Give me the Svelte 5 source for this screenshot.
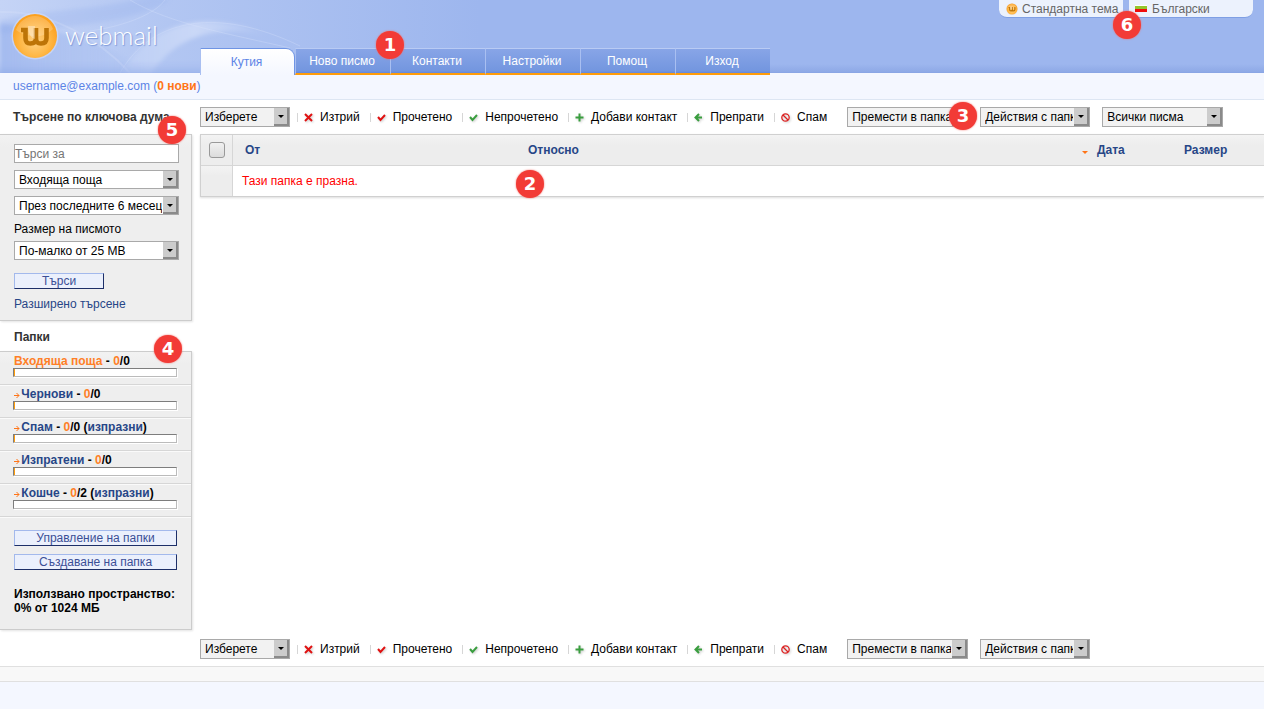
<script>
  const tabs = ['Кутия', 'Ново писмо', 'Контакти', 'Настройки', 'Помощ', 'Изход'];

  const actions = [
    {icon: 'delete', label: 'Изтрий'},
    {icon: 'read', label: 'Прочетено'},
    {icon: 'unread', label: 'Непрочетено'},
    {icon: 'add', label: 'Добави контакт'},
    {icon: 'forward', label: 'Препрати'},
    {icon: 'spam', label: 'Спам'},
  ];

  const folders = [
    {name: 'Входяща поща', unread: 0, total: 0, used: 0.6, active: true},
    {name: 'Чернови', unread: 0, total: 0, used: 0.6},
    {name: 'Спам', unread: 0, total: 0, used: 0.6, clear: true},
    {name: 'Изпратени', unread: 0, total: 0, used: 0.6},
    {name: 'Кошче', unread: 0, total: 2, used: 0, clear: true},
  ];

  let activeTab = $state(0);
  let keyword = $state('');
</script>

{#snippet dropdown(label, cls, id)}
  <span class="dropdown {cls}">
    <select {id} aria-label={id ? undefined : label}><option>{label}</option></select>
  </span>
{/snippet}

{#snippet logo(size)}
  <svg class="mark" width={size} height={size} viewBox="0 0 48 48" aria-hidden="true">
    <defs>
      <radialGradient id="ball{size}" cx="0.5" cy="0.62" r="0.55">
        <stop offset="0" stop-color="#ffd183" />
        <stop offset="0.6" stop-color="#ffb847" />
        <stop offset="1" stop-color="#fca120" />
      </radialGradient>
    </defs>
    <circle cx="24" cy="24" r="23.500" fill="#d5e0fb" opacity="0.6" />
    <circle cx="24" cy="24" r="22" fill="url(#ball{size})" />
    <path d="M24 4a20 20 0 0 1 18 13c-7 6-12 8-20 7C12 23 8 20 5 18A20 20 0 0 1 24 4z" fill="#fff" opacity="0.2" />
    <path d="M10 18h4.500v8c0 4 1.500 5.500 5 5.500s5.500-1.500 5.500-5.500V16M25 26c0 4 1.500 5.500 5 5.500s5.500-1.500 5.500-5.500V16" fill="none" stroke="#bd7407" stroke-width="4.600" />
    <path d="M17 14h7v13c-4-1-7-5-7-13z" fill="#fff" opacity="0.35" />
  </svg>
{/snippet}

{#snippet icon(name)}
  <svg class="icon" width="9" height="9" viewBox="0 0 9 9" fill="none" stroke-width="2" aria-hidden="true">
    {#if name === 'delete'}
      <path d="M1 1l7 7M8 1l-7 7" stroke="#e01212" />
    {:else if name === 'read'}
      <path d="M1 4l2.500 3L8 2" stroke="#e01212" />
    {:else if name === 'unread'}
      <path d="M1 4l2.500 3L8 2" stroke="#3a9e3f" />
    {:else if name === 'add'}
      <path d="M4.500 0.500v8M0.500 4.500h8" stroke="#3a9e3f" />
    {:else if name === 'forward'}
      <path d="M5 1L1.500 4.500 5 8M2 4.500h6" stroke="#3a9e3f" />
    {:else}
      <circle cx="4.500" cy="4.500" r="3.700" stroke="#dd2222" stroke-width="1.300" />
      <path d="M2 2l5 5" stroke="#dd2222" stroke-width="1.300" />
    {/if}
  </svg>
{/snippet}

{#snippet toolbar()}
  {@render dropdown('Изберете', 'w90')}
  <div class="actions">
    {#each actions as action}
      <button class="action">{@render icon(action.icon)}{action.label}</button>
    {/each}
  </div>
{/snippet}

<header>
  <svg class="swirl" width="480" height="73" viewBox="0 0 480 73" aria-hidden="true">
    <defs>
      <linearGradient id="sky">
        <stop offset="0" stop-color="#c5d4f6" />
        <stop offset="0.35" stop-color="#b2c6f2" />
        <stop offset="1" stop-color="#9db6ee" />
      </linearGradient>
      <linearGradient id="wave">
        <stop offset="0" stop-color="#8eaaea" />
        <stop offset="1" stop-color="#9db6ee" stop-opacity="0" />
      </linearGradient>
      <linearGradient id="arc">
        <stop offset="0" stop-color="#dbe5fb" stop-opacity="0.2" />
        <stop offset="0.5" stop-color="#dbe5fb" stop-opacity="0.6" />
        <stop offset="1" stop-color="#dbe5fb" stop-opacity="0" />
      </linearGradient>
      <filter id="soft"><feGaussianBlur stdDeviation="2" /></filter>
    </defs>
    <path d="M0 0h480v73H0z" fill="url(#sky)" />
    <path d="M0 24C60 26 120 48 160 80H0z" fill="url(#wave)" opacity="0.6" filter="url(#soft)" />
    <path d="M0 20C50 8 90 12 150 -4L170 0C130 24 70 26 0 34z" fill="#8eaaea" opacity="0.25" filter="url(#soft)" />
    <path d="M120 76C150 20 210 8 270 36 220 24 175 34 150 76z" fill="url(#arc)" filter="url(#soft)" />
    <path d="M120 73C150 20 215 5 300 46M130 0c40 24 100 34 160 48M165 0c-10 14-40 26-75 31" fill="none" stroke="#dbe5fb" opacity="0.3" />
    <path d="M0 12C50 10 100 40 130 73" fill="none" stroke="#dbe5fb" stroke-width="2" opacity="0.25" />
  </svg>
  <a class="logo" href="#home">{@render logo(48)}<span>webmail</span></a>
  <nav>
    {#each tabs as tab, i}
      <a href="#tab{i}" class:active={i === activeTab} onclick={() => (activeTab = i)}>{tab}</a>
    {/each}
    <b class="badge one">1</b>
  </nav>
  <div class="prefs">
    <button class="theme">{@render logo(12)}Стандартна тема</button>
    <button class="lang"><i class="flag"></i>Български</button>
    <b class="badge six">6</b>
  </div>
</header>

<div class="user"><a href="#account">username@example.com</a> (<a class="new" href="#new">0 нови</a>)</div>

<div class="layout">
  <aside>
    <h2 class="first"><label for="keyword">Търсене по ключова дума</label><b class="badge five">5</b></h2>
    <form class="panel search" onsubmit={(e) => e.preventDefault()}>
      <input id="keyword" type="text" placeholder="Търси за" bind:value={keyword} />
      {@render dropdown('Входяща поща', 'plain')}
      {@render dropdown('През последните 6 месеца', 'plain')}
      <label for="size">Размер на писмото</label>
      {@render dropdown('По-малко от 25 MB', 'plain', 'size')}
      <button class="btn short">Търси</button>
      <a href="#advanced">Разширено търсене</a>
    </form>

    <h2>Папки<b class="badge four">4</b></h2>
    <div class="panel">
      <ul>
        {#each folders as folder}
          <li>
            <div class="name">
              {#if !folder.active}
                <svg width="6" height="7" viewBox="0 0 6 7" aria-hidden="true"><path d="M0 3.500h5M2.500 1L5 3.500 2.500 6" fill="none" stroke="#ff7417" /></svg>
              {/if}
              <a href="#folder" class:active={folder.active}>{folder.name}</a> - <span>{folder.unread}</span>/{folder.total}
              {#if folder.clear}(<a href="#clear">изпразни</a>){/if}
            </div>
            <div class="bar"><div style="width: {folder.used}%"></div></div>
          </li>
        {/each}
      </ul>
      <div class="manage">
        <button class="btn">Управление на папки</button>
        <button class="btn">Създаване на папка</button>
        <p>Използвано пространство:<br />0% от 1024 МБ</p>
      </div>
    </div>
  </aside>

  <main>
    <div class="toolbar">
      {@render toolbar()}
      {@render dropdown('Премести в папка', 'w121')}
      {@render dropdown('Действия с папката', 'w110')}
      {@render dropdown('Всички писма', 'w121')}
      <b class="badge three">3</b>
    </div>
    <div class="messages">
      <table>
        <thead>
          <tr>
            <th class="check"><input type="checkbox" aria-label="Маркирай всички" /></th>
            <th class="from"><a href="#from">От</a></th>
            <th><a href="#subject">Относно</a></th>
            <th class="date"><i class="sort"></i><a href="#date">Дата</a></th>
            <th class="size"><a href="#size">Размер</a></th>
          </tr>
        </thead>
        <tbody>
          <tr>
            <td class="check"></td>
            <td class="empty" colspan="4">Тази папка е празна.</td>
          </tr>
        </tbody>
      </table>
      <b class="badge two">2</b>
    </div>
    <div class="toolbar bottom">
      {@render toolbar()}
      {@render dropdown('Премести в папка', 'w121')}
      {@render dropdown('Действия с папката', 'w110')}
    </div>
  </main>
</div>

<footer></footer>

<style>
  :global(body) {
    margin: 0;
    background: #f4f7ff;
    color: #000;
    font: 12px/14px "Liberation Sans", Arial, sans-serif;
  }

  a {
    color: #274687;
    text-decoration: none;
  }

  button, input, select {
    box-sizing: border-box;
    margin: 0;
    font: inherit;
    color: inherit;
  }

  header {
    position: relative;
    display: flex;
    align-items: flex-end;
    height: 73px;
    background: linear-gradient(#9db6ee 64px, #8ea9e6 72px, #86a3e4);
  }

  .swirl {
    position: absolute;
    left: 0;
    top: 0;
    -webkit-mask-image: linear-gradient(#000 60px, rgba(0, 0, 0, 0.5));
    mask-image: linear-gradient(#000 60px, rgba(0, 0, 0, 0.5));
  }

  .logo {
    position: relative;
    display: flex;
    align-self: flex-start;
    align-items: center;
    gap: 6px;
    box-sizing: border-box;
    width: 200px;
    height: 72px;
    padding-left: 11px;
    color: #fff;
    font: 300 26px/30px Lato, sans-serif;
    text-shadow: 1px 1px 1px #7c98d8;
  }

  .logo span {
    padding-bottom: 2px;
  }

  nav {
    position: relative;
    display: flex;
    margin-bottom: -2px;
  }

  nav a {
    box-sizing: border-box;
    width: 95px;
    height: 27px;
    padding: 5px 2px 0 0;
    border: solid #5f86de;
    border-color: #b9cbf4 #5f86dd #ff9c0a #a9bff1;
    border-width: 1px 0 2px 1px;
    background: linear-gradient(#88a5e7, #7396df 22px, #6388da);
    color: #fff;
    text-align: center;
  }

  nav a.active {
    padding-top: 6px;
    border-color: #6f94e4;
    border-width: 1px 1px 0 1px;
    border-left-color: #a9bff1;
    border-radius: 0 9px 0 0;
    background: linear-gradient(#fff, #f4f7ff);
    color: #5c84e6;
  }

  .prefs {
    position: relative;
    display: flex;
    align-self: flex-start;
    gap: 6px;
    margin: 0 11px 0 auto;
  }

  .prefs button {
    display: flex;
    align-items: center;
    width: 124px;
    height: 18px;
    padding: 0;
    border: 0;
    border-bottom: 1px solid #7f9fe4;
    background: #ecf2fd;
    color: #666;
    white-space: nowrap;
  }

  .prefs .theme {
    gap: 4px;
    padding-left: 7px;
    border-radius: 0 0 0 8px;
  }

  .prefs .lang {
    gap: 5px;
    padding-left: 6px;
    border-radius: 0 0 8px 0;
  }

  .mark {
    flex: none;
  }

  .flag {
    width: 12px;
    height: 7px;
    background: linear-gradient(#fff 1px, #93c52e 1px 4px, #f00d0d 4px);
  }

  .user {
    padding: 6px 13px;
    border-bottom: 1px solid #dde6f3;
    color: #5c84e6;
  }

  .user a {
    color: #5c84e6;
  }

  .user a.new {
    color: #ff7417;
    font-weight: bold;
  }

  .layout {
    display: flex;
    gap: 8px;
    background: #fff;
  }

  aside {
    flex: none;
    width: 192px;
    padding-bottom: 36px;
  }

  h2 {
    position: relative;
    margin: 0;
    padding: 9px 14px 7px;
    color: #333;
    font-size: 12px;
    line-height: 14px;
  }

  h2.first {
    padding: 10px 13px;
  }

  .panel {
    border: solid #ccc;
    border-width: 1px 1px 1px 0;
    background: linear-gradient(#f2f2f2, #eee 12px);
    box-shadow: 1px 1px 2px #e4e4e4;
  }

  .search {
    display: flex;
    flex-direction: column;
    align-items: flex-start;
    padding: 9px 12px 9px 14px;
  }

  .search input {
    width: 165px;
    height: 19px;
    margin-bottom: 7px;
    padding: 0;
    border: 1px solid #a9a9a9;
    background: #fff;
  }

  .search input::placeholder {
    color: #757575;
  }

  .search label {
    margin-bottom: 5px;
  }

  .search .btn {
    margin: 6px 0 8px;
  }

  .dropdown {
    position: relative;
    flex: none;
  }

  .dropdown select {
    display: block;
    width: 100%;
    height: 20px;
    padding: 0 16px 0 4px;
    border: 1px solid #a9a9a9;
    border-radius: 0;
    background: #f2f2f2;
    appearance: none;
  }

  /* raised arrow button over the right end of the select */
  .dropdown::after {
    content: '';
    position: absolute;
    top: 1px;
    right: 1px;
    bottom: 1px;
    box-sizing: border-box;
    width: 15px;
    border: solid #8a8a8a;
    border-width: 0 2px 2px 0;
    background: #ccc;
    pointer-events: none;
  }

  .dropdown::before {
    content: '';
    position: absolute;
    z-index: 1;
    top: 8px;
    right: 6px;
    border: solid transparent;
    border-width: 3px 3px 0;
    border-top-color: #000;
    pointer-events: none;
  }

  .dropdown.plain {
    width: 165px;
    margin-bottom: 7px;
  }

  .plain select {
    height: 19px;
    background: #fff;
  }

  .w90 {
    width: 90px;
  }

  .w110 {
    width: 110px;
  }

  .w121 {
    width: 121px;
  }

  .btn {
    width: 163px;
    height: 16px;
    padding: 0;
    border: 1px solid;
    border-color: #a3b9ec #1d2f68 #1d2f68 #a3b9ec;
    background: #ebf0fc;
    color: #3b4f96;
    line-height: 14px;
  }

  .btn.short {
    width: 90px;
  }

  ul {
    margin: 0;
    padding: 0;
    list-style: none;
  }

  li {
    height: 30px;
    padding: 2px 14px 0 13px;
    border-bottom: 1px solid #d6d6d6;
    font-weight: bold;
  }

  li + li {
    border-top: 1px solid #fafafa;
    padding-top: 1px;
  }

  .name {
    padding-left: 1px;
    white-space: nowrap;
  }

  .name svg {
    vertical-align: -1px;
    margin-right: -2px;
  }

  .name span, .name a.active {
    color: #ff7f27;
  }

  .bar {
    height: 7px;
    border: 1px solid;
    border-color: #7d7d7d #bbb #bbb #7d7d7d;
    background: #fff;
    box-shadow: 1px 1px #fff;
  }

  .bar div {
    height: 7px;
    background: #ff9c0a;
  }

  .manage {
    display: flex;
    flex-direction: column;
    align-items: flex-start;
    gap: 8px;
    padding: 12px 14px 14px;
    border-top: 1px solid #fafafa;
  }

  .manage p {
    margin: 9px 0 0;
    font-weight: bold;
  }

  main {
    display: flex;
    flex: 1;
    flex-direction: column;
    min-width: 0;
  }

  .toolbar {
    position: relative;
    display: flex;
    align-items: center;
    gap: 12px;
    padding: 7px 0;
  }

  .toolbar.bottom {
    margin-top: auto;
  }

  .actions {
    display: flex;
    gap: 10px;
    margin: 0 8px 0 -5px;
  }

  .action {
    display: flex;
    align-items: center;
    gap: 7px;
    padding: 0 0 0 6px;
    border: 0;
    background: linear-gradient(#d6d6d6, #d6d6d6) 0 3px / 1px 9px no-repeat;
    border-left: 1px solid transparent;
    background-origin: border-box;
    white-space: nowrap;
  }

  .icon {
    filter: drop-shadow(1px 1px 1px #ccc);
  }

  .messages {
    position: relative;
  }

  table {
    width: 100%;
    table-layout: fixed;
    border-spacing: 0;
    border: solid #d0d0d0;
    border-width: 1px 0 1px 1px;
    box-shadow: 0 1px 2px #ddd;
  }

  th {
    height: 30px;
    padding: 0 12px;
    border-bottom: 1px solid #d6d6d6;
    background: linear-gradient(#f3f3f3, #ededed 10px);
    text-align: left;
  }

  td {
    height: 30px;
    padding: 0 9px;
  }

  .check {
    box-sizing: border-box;
    width: 32px;
    padding: 0 0 0 8px;
    border-right: 1px solid #d6d6d6;
    background: linear-gradient(#f3f3f3, #ededed 10px);
    line-height: 0;
  }

  .check input {
    width: 16px;
    height: 16px;
    border: 1px solid #999;
    border-radius: 3px;
    background: linear-gradient(#f1f1f1, #dcdcdc);
    appearance: none;
  }

  .from {
    width: 259px;
  }

  .date {
    width: 78px;
  }

  .size {
    width: 68px;
  }

  .sort {
    display: inline-block;
    margin-right: 9px;
    border: solid transparent;
    border-width: 3px 3px 0;
    border-top-color: #ff7417;
  }

  .empty {
    color: #f00;
  }

  /* numbered callouts laid over the page */
  .badge {
    position: absolute;
    z-index: 2;
    width: 28px;
    height: 28px;
    border-radius: 50%;
    background: #f23b36;
    box-shadow: 0 0 2px #f26b66;
    color: #fff;
    font: bold 18px/28px "DejaVu Sans", sans-serif;
    text-align: center;
  }

  .one {
    left: 176px;
    top: -17px;
  }

  .two {
    left: 316px;
    top: 36px;
  }

  .three {
    left: 749px;
    top: 2px;
  }

  .four {
    left: 154px;
    top: 14px;
  }

  .five {
    left: 158px;
    top: 16px;
  }

  .six {
    left: 114px;
    top: 11px;
  }

  footer {
    height: 14px;
    border: solid #e0e0e0;
    border-width: 1px 0;
    background: #f8f8f8;
  }
</style>
